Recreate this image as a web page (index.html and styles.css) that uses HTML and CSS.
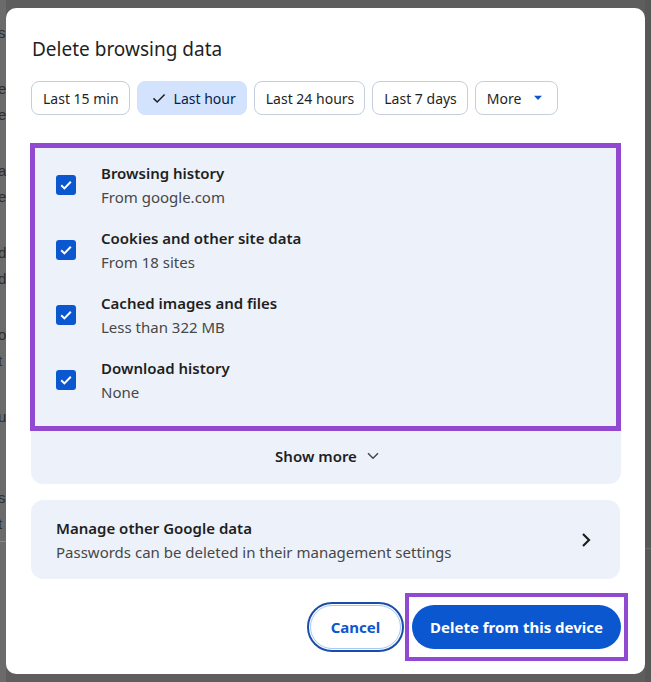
FILE: index.html
```html
<!DOCTYPE html>
<html>
<head>
<meta charset="utf-8">
<link rel="stylesheet" href="styles.css">
</head>
<body>
<div class="backdrop">
  <div class="behind" aria-hidden="true">
    <div class="behind-line g-first">s</div>
    <div class="behind-line g-big">e</div>
    <div class="behind-line g-small">e</div>
    <div class="behind-line g-big">a</div>
    <div class="behind-line g-small">e</div>
    <div class="behind-line g-big">d</div>
    <div class="behind-line g-small">d</div>
    <div class="behind-line g-big">o</div>
    <div class="behind-line g-small">t</div>
    <div class="behind-line g-big">u</div>
    <div class="behind-line g-huge">s</div>
    <div class="behind-line g-small">t</div>
    <div class="behind-rule"></div>
  </div>
  <div class="dialog">
    <h1 class="title">Delete browsing data</h1>
    <div class="chips">
      <button class="chip">Last 15 min</button>
      <button class="chip chip-selected"><svg class="chip-check" viewBox="0 0 14 14" width="14" height="14"><path d="M1.5 7.4 L5.2 11 L12.6 3.4" fill="none" stroke="#1f1f1f" stroke-width="1.5"/></svg>Last hour</button>
      <button class="chip">Last 24 hours</button>
      <button class="chip">Last 7 days</button>
      <button class="chip chip-more">More<svg class="caret" viewBox="0 0 10 6" width="10" height="6"><path d="M1 0.8 H9 L5 5 Z" fill="#0b57d0"/></svg></button>
    </div>
    <div class="panel">
      <div class="list">
        <div class="row">
          <span class="checkbox"><svg viewBox="0 0 20 20" width="20" height="20"><path d="M5.2 10.3 L8.4 13.4 L14.8 6.8" fill="none" stroke="#fff" stroke-width="2"/></svg></span>
          <div class="row-text"><div class="row-title">Browsing history</div><div class="row-sub">From google.com</div></div>
        </div>
        <div class="row">
          <span class="checkbox"><svg viewBox="0 0 20 20" width="20" height="20"><path d="M5.2 10.3 L8.4 13.4 L14.8 6.8" fill="none" stroke="#fff" stroke-width="2"/></svg></span>
          <div class="row-text"><div class="row-title">Cookies and other site data</div><div class="row-sub">From 18 sites</div></div>
        </div>
        <div class="row">
          <span class="checkbox"><svg viewBox="0 0 20 20" width="20" height="20"><path d="M5.2 10.3 L8.4 13.4 L14.8 6.8" fill="none" stroke="#fff" stroke-width="2"/></svg></span>
          <div class="row-text"><div class="row-title">Cached images and files</div><div class="row-sub">Less than 322 MB</div></div>
        </div>
        <div class="row">
          <span class="checkbox"><svg viewBox="0 0 20 20" width="20" height="20"><path d="M5.2 10.3 L8.4 13.4 L14.8 6.8" fill="none" stroke="#fff" stroke-width="2"/></svg></span>
          <div class="row-text"><div class="row-title">Download history</div><div class="row-sub">None</div></div>
        </div>
      </div>
      <button class="show-more">Show more<svg viewBox="0 0 12 8" width="12" height="8"><path d="M1 1.3 L6 6.3 L11 1.3" fill="none" stroke="#444746" stroke-width="1.5"/></svg></button>
    </div>
    <div class="manage">
      <div class="manage-text">
        <div class="manage-title">Manage other Google data</div>
        <div class="manage-sub">Passwords can be deleted in their management settings</div>
      </div>
      <svg class="manage-arrow" viewBox="0 0 10 16" width="10" height="16"><path d="M2 2 L8 8 L2 14" fill="none" stroke="#1f1f1f" stroke-width="2.2"/></svg>
    </div>
    <div class="actions">
      <button class="btn btn-cancel">Cancel</button>
      <button class="btn btn-delete">Delete from this device</button>
    </div>
  </div>
  <div class="behind-right">
    <div class="behind-rule right-rule"></div>
  </div>
</div>
</body>
</html>
```
FILE: styles.css
```css
html, body {
  margin: 0;
  padding: 0;
}
body {
  background: #5e5e5e;
  font-family: "Noto Sans", "Open Sans", sans-serif;
  color: #1f1f1f;
}
.backdrop {
  width: 651px;
  height: 682px;
  display: flex;
  align-items: flex-start;
  overflow: hidden;
}
.behind {
  width: 6px;
  height: 682px;
  flex: none;
  background: #6b6b6b;
  overflow: hidden;
  font-family: "Liberation Sans", sans-serif;
  font-size: 15px;
  color: #2e2e2e;
}
.behind-line {
  height: 20px;
  line-height: 20px;
  margin-left: -2px;
}
.g-first { margin-top: 23px; }
.g-big { margin-top: 36px; }
.g-small { margin-top: 6px; }
.g-huge { margin-top: 61px; }
.behind-rule {
  margin-top: 7px;
  height: 1px;
  background: #8a8a8a;
}
.behind-right {
  width: 6px;
  height: 682px;
  flex: none;
  background: #585858;
}
.right-rule {
  margin-top: 548px;
  background: #6e6e6e;
}
.dialog {
  width: 639px;
  height: 666px;
  flex: none;
  margin-top: 8px;
  background: #fff;
  border-radius: 10px;
  padding: 29px 24px 0 25px;
  box-sizing: border-box;
}
.title {
  margin: 0 0 0 1px;
  font-size: 19px;
  line-height: 24px;
  font-weight: 400;
  color: #1f1f1f;
}
.chips {
  display: flex;
  gap: 7px;
  margin-top: 20px;
}
.chip {
  height: 34px;
  box-sizing: border-box;
  border: 1px solid #c5cedb;
  border-radius: 8px;
  background: #fff;
  padding: 0 10px 0 11px;
  font-family: inherit;
  font-size: 14px;
  color: #1f1f1f;
  display: flex;
  align-items: center;
  white-space: nowrap;
}
.chip-selected {
  background: #d3e3fd;
  border-color: #d3e3fd;
  color: #041e49;
  padding: 0 10px 0 14px;
  gap: 8px;
}
.chip-more {
  gap: 12px;
  padding-right: 14px;
}
.panel {
  margin-top: 28px;
  background: #edf2fa;
  border-radius: 12px;
}
.list {
  margin-left: -1px;
  height: 288px;
  box-sizing: border-box;
  border: 5px solid #9149d1;
  background: #edf2fa;
  padding: 4px 0 0 21px;
}
.row {
  height: 65px;
  display: flex;
  align-items: center;
  gap: 25px;
}
.checkbox {
  width: 20px;
  height: 20px;
  border-radius: 3px;
  background: #0b57d0;
  display: block;
  flex: none;
}
.checkbox svg {
  display: block;
}
.row-text {
  padding-top: 2px;
}
.row-title {
  font-size: 15px;
  line-height: 23px;
  font-weight: 600;
  color: #1f1f1f;
}
.row-sub {
  font-size: 15px;
  line-height: 25px;
  color: #474747;
}
.show-more {
  width: 100%;
  height: 53px;
  border: 0;
  background: transparent;
  display: flex;
  align-items: center;
  justify-content: center;
  gap: 10px;
  font-family: inherit;
  font-size: 15px;
  font-weight: 600;
  color: #1f1f1f;
  padding: 0 0 4px 2px;
}
.manage {
  margin-top: 16px;
  height: 79px;
  background: #edf2fa;
  border-radius: 12px;
  display: flex;
  align-items: center;
  justify-content: space-between;
  padding: 0 29px 0 25px;
  box-sizing: border-box;
  width: 589px;
}
.manage-title {
  font-size: 15px;
  line-height: 24px;
  font-weight: 600;
}
.manage-sub {
  font-size: 15px;
  line-height: 24px;
  color: #474747;
}
.manage-arrow {
  display: block;
}
.actions {
  display: flex;
  justify-content: flex-end;
  gap: 11px;
  margin-top: 26px;
}
.btn {
  height: 44px;
  border-radius: 22px;
  font-family: inherit;
  font-size: 15px;
  font-weight: 700;
  box-sizing: border-box;
}
.btn-cancel {
  width: 91px;
  background: #fff;
  border: 1px solid #a8c7fa;
  color: #0b57d0;
  outline: 2px solid #1a4ea6;
  outline-offset: 1px;
}
.btn-delete {
  position: relative;
  width: 209px;
  background: #0b57d0;
  border: 0;
  color: #fff;
}
.btn-delete::after {
  content: "";
  position: absolute;
  top: -12px;
  bottom: -12px;
  left: -7px;
  right: -7px;
  border: 4px solid #9149d1;
  pointer-events: none;
}
```
